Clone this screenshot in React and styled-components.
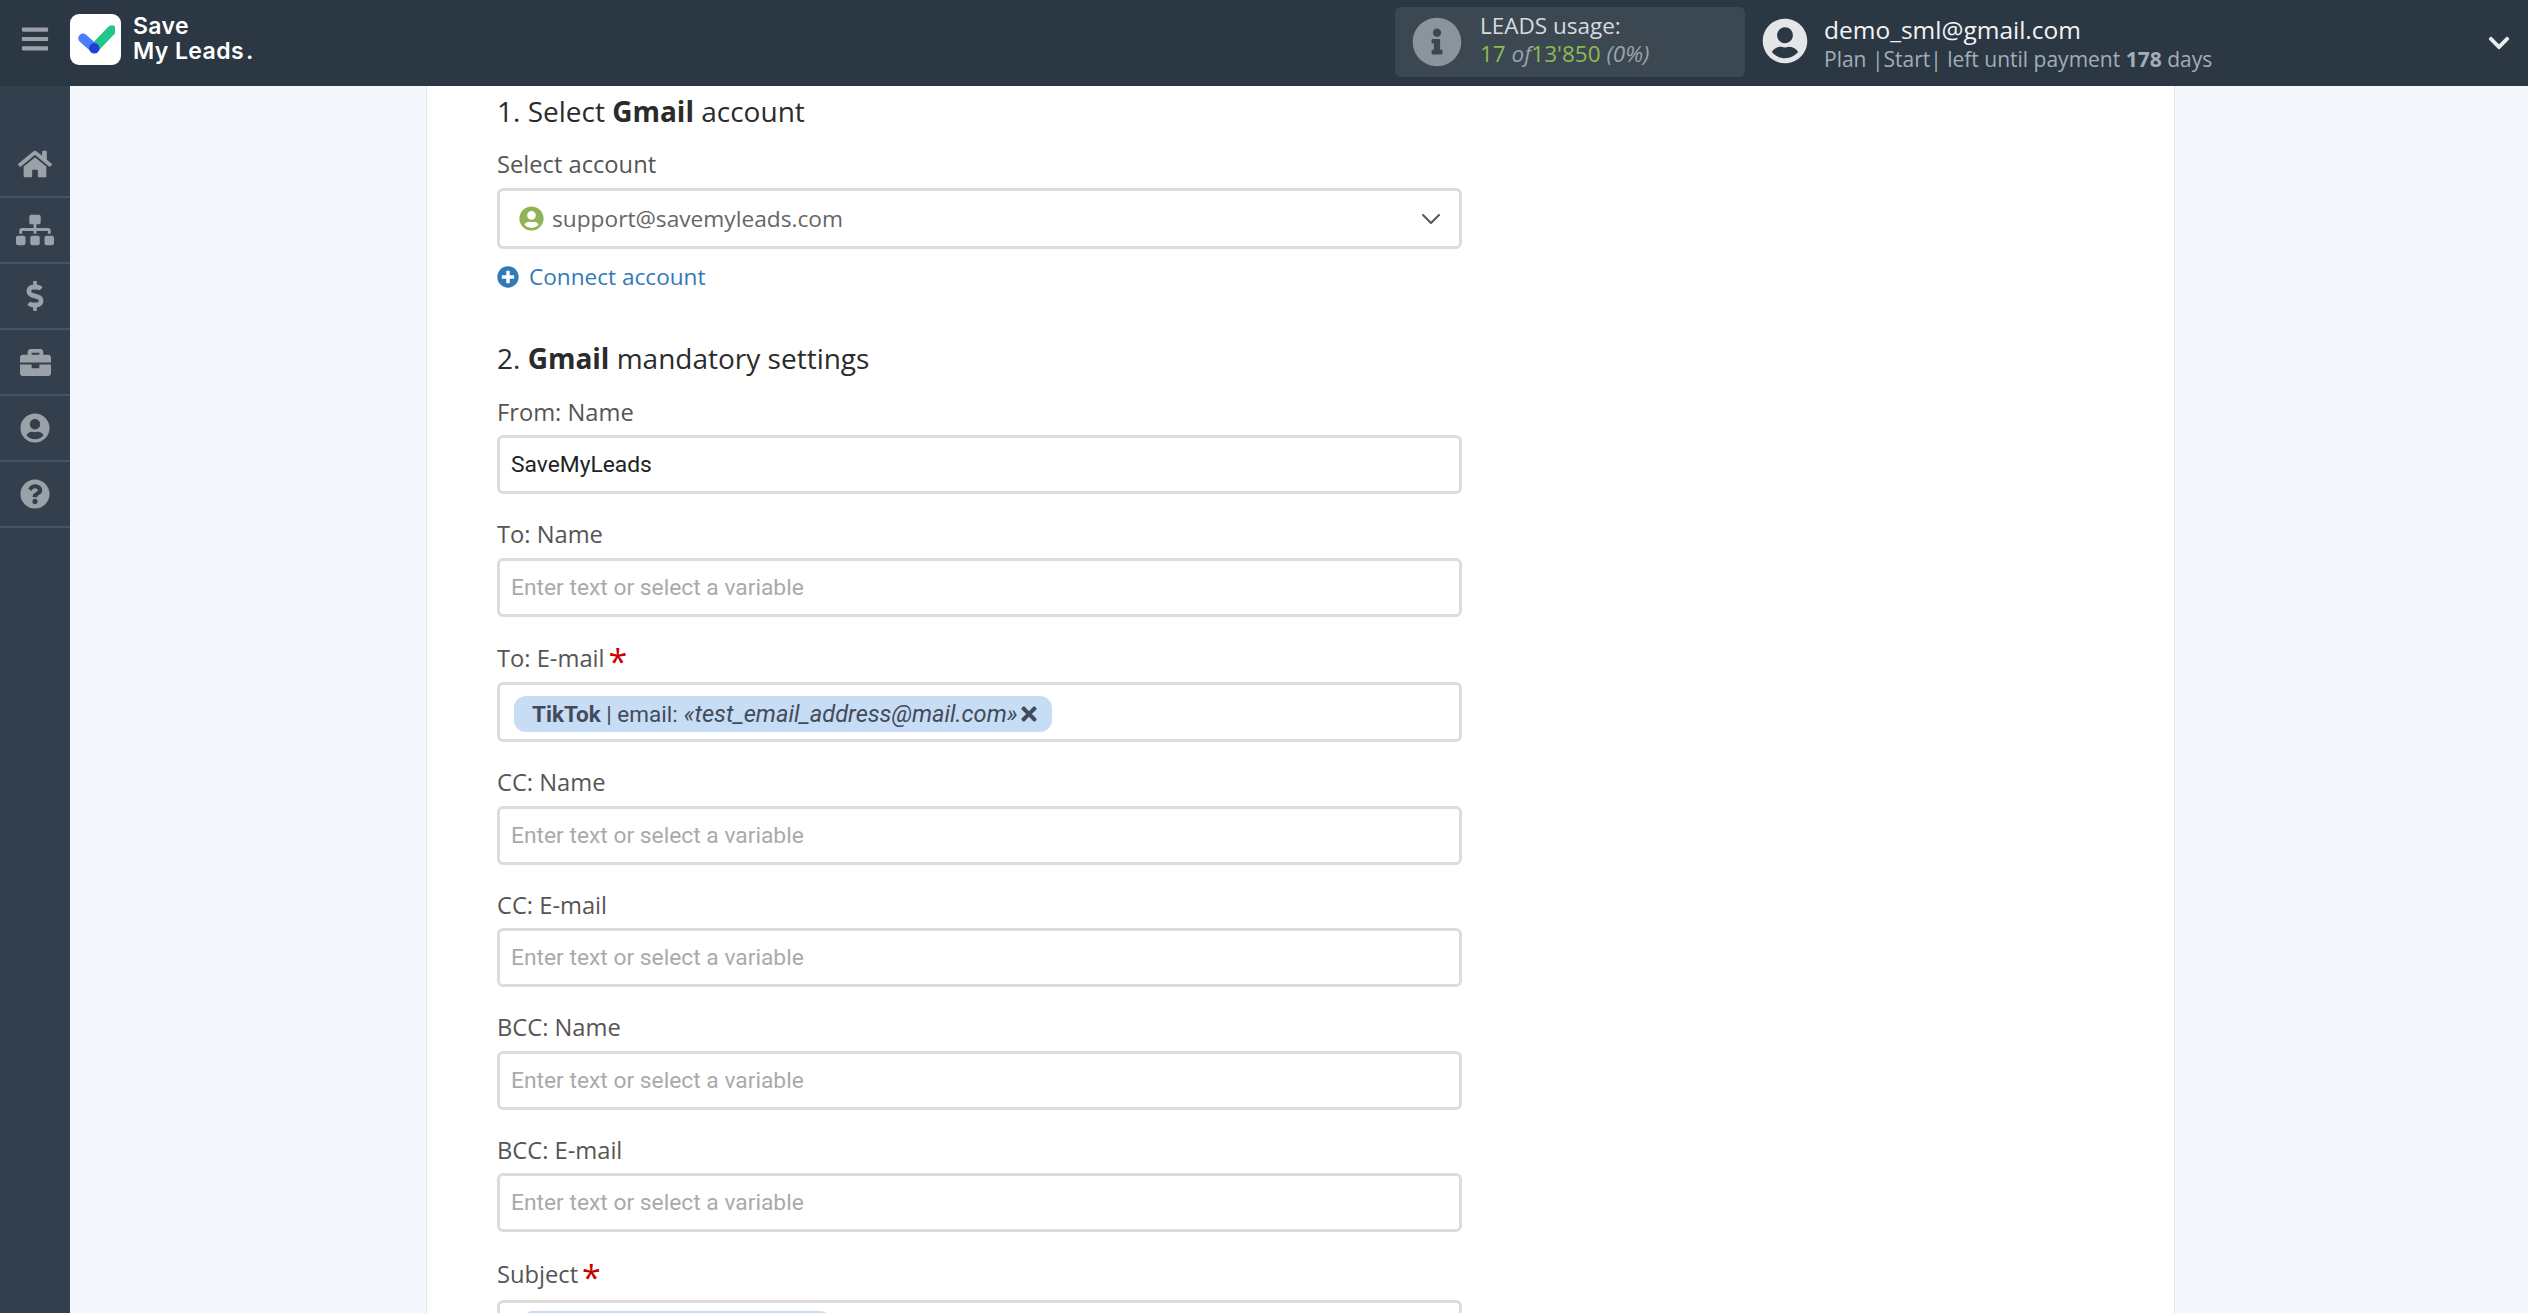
import React from "react";
import styled, { createGlobalStyle } from "styled-components";
import {
  FaHome,
  FaSitemap,
  FaDollarSign,
  FaBriefcase,
  FaUserCircle,
  FaQuestionCircle,
  FaInfoCircle,
  FaChevronDown,
  FaPlusCircle,
  FaTimes,
  FaBars,
} from "react-icons/fa";
import { LuChevronDown } from "react-icons/lu";

const GlobalStyle = createGlobalStyle`
  html, body {
    margin: 0;
    height: 100%;
    overflow: hidden;
    background: #f4f7fc;
    font-family: "Open Sans", "Liberation Sans", sans-serif;
  }
  * { box-sizing: border-box; }
`;

const Page = styled.div`
  height: 100vh;
  display: flex;
  flex-direction: column;
  overflow: hidden;
`;

// header
const Header = styled.header`
  flex: 0 0 86px;
  display: flex;
  align-items: center;
  background: #2c3744;
  color: #fff;
`;

const Brand = styled.div`
  display: flex;
  align-items: center;
  margin-bottom: 8px;
`;

const MenuButton = styled.div`
  width: 70px;
  display: flex;
  justify-content: center;
  color: #9ba1a8;
  font-size: 30px;
`;

const LogoBox = styled.div`
  width: 51px;
  height: 51px;
  border-radius: 9px;
  background: #fff;
  display: flex;
  align-items: center;
  justify-content: center;
`;

const LogoText = styled.div`
  margin-left: 12px;
  font-family: "Inter", sans-serif;
  font-size: 23px;
  font-weight: 600;
  line-height: 25px;
  letter-spacing: 0.4px;

  span {
    margin-left: 2px;
  }
`;

const HeaderRight = styled.div`
  margin-left: auto;
  display: flex;
  align-items: center;
`;

const UsageBox = styled.div`
  width: 350px;
  height: 70px;
  margin-bottom: 3px;
  padding-left: 17px;
  border-radius: 6px;
  background: #3b4852;
  display: flex;
  align-items: center;
  gap: 18px;
  color: #8b949b;
  font-size: 50px;
`;

const UsageText = styled.div`
  font-size: 22.5px;
  line-height: 28px;
  margin-top: -4px;
  color: #d6dade;
`;

const UsageNumbers = styled.div`
  color: #8dba52;
  font-size: 22.5px;
`;

const Muted = styled.i`
  color: #9aa3ab;
`;

const Avatar = styled.div`
  margin: 0 0 4px 17px;
  display: flex;
  color: #e4e5e7;
  font-size: 46px;
`;

const UserInfo = styled.div`
  margin-left: 16px;
  width: 663px;
`;

const UserMail = styled.div`
  font-size: 24.5px;
  line-height: 32px;
  color: #f2f3f4;
`;

const UserPlan = styled.div`
  font-size: 21px;
  line-height: 26px;
  color: #a3adb8;

  b {
    font-weight: 700;
  }
`;

const HeaderChevron = styled.div`
  display: flex;
  margin-right: 17px;
  color: #e9ebed;
  font-size: 24px;
`;

// sidebar
const Body = styled.div`
  flex: 1;
  display: flex;
  min-height: 0;
`;

const Sidebar = styled.nav`
  flex: 0 0 70px;
  padding-top: 46px;
  background: #343f4e;
`;

const SideItem = styled.div`
  height: 66px;
  display: flex;
  align-items: center;
  justify-content: center;
  border-bottom: 2px solid #485361;
  color: #9ba1a8;
  font-size: ${(p) => p.$size || 30}px;
`;

// content
const Main = styled.main`
  flex: 1;
  padding-left: 356px;
  overflow: hidden;
`;

const Card = styled.div`
  width: 1749px;
  min-height: 100%;
  padding: 5px 0 0 70px;
  background: #fff;
  border-left: 1px solid #e3e7ec;
  border-right: 1px solid #e3e7ec;
`;

const Section = styled.div`
  width: 965px;
`;

const Heading = styled.h2`
  margin: 0;
  font-size: 28px;
  line-height: 40px;
  font-weight: 400;
  color: #2b2b2b;

  b {
    font-weight: 700;
  }
`;

const SecondHeading = styled(Heading)`
  margin: 52px 0 1.5px;
  line-height: 24px;
`;

const Label = styled.label`
  display: block;
  height: ${(p) => 63.5 + (p.$extra || 0)}px;
  padding-top: ${(p) => 23 + (p.$extra || 0) / 2}px;
  font-size: 23.7px;
  line-height: 34px;
  font-weight: 500;
  color: #555;
`;

const SelectLabel = styled(Label)`
  height: 57px;
  padding-top: 16px;
`;

const Star = styled.span`
  margin-left: 4px;
  font-family: "Open Sans", sans-serif;
  font-size: 34px;
  line-height: 20px;
  vertical-align: -7px;
  color: #c90000;
`;

const InputBox = styled.div`
  height: 59px;
  padding: 0 12px 0 11px;
  border: 3px solid #dcdcdc;
  border-radius: 6px;
  background: #fff;
  display: flex;
  align-items: center;
  font-family: "Roboto", sans-serif;
  font-size: 22.8px;
  color: ${(p) => (p.$filled ? "#222" : "#aaa")};
`;

const SelectBox = styled(InputBox)`
  height: 61px;
  padding: 0 0 0 19px;
  font-family: "Open Sans", sans-serif;
  font-size: 22.7px;
  color: #666;
`;

const AccountIcon = styled.span`
  display: flex;
  margin-right: 8px;
  color: #8fb356;
  font-size: 25px;
`;

const SelectArrow = styled.span`
  display: flex;
  margin-left: auto;
  margin-right: 12px;
  color: #555;
  font-size: 32px;

  svg {
    stroke-width: 1.5;
  }
`;

const ConnectLink = styled.a`
  margin-top: 11px;
  display: flex;
  align-items: center;
  gap: 10px;
  font-size: 22.6px;
  line-height: 34px;
  color: #3279b7;

  svg {
    font-size: 22px;
  }
`;

const ChipBox = styled(InputBox)`
  height: 60px;
  padding-top: 4px;
`;

const Chip = styled.span`
  height: 36px;
  padding: 0 12px 0 18px;
  margin-left: 3px;
  width: ${(p) => (p.$width ? `${p.$width}px` : "auto")};
  border-radius: 12px;
  background: #c7dcf5;
  display: inline-flex;
  align-items: center;
  font-size: 22.5px;
  color: #434b5a;
  white-space: nowrap;

  b {
    font-weight: 700;
  }

  i {
    margin-left: 6px;
    font-size: 23.6px;
  }

  svg {
    font-size: 22px;
  }
`;

const ClippedBox = styled(InputBox)`
  padding-top: 8px;
  align-items: flex-start;
`;

const ClippedChip = styled(Chip)`
  margin-left: 10px;
`;

const emptyFields = ["To: Name"];
const ccFields = ["CC: Name", "CC: E-mail", "BCC: Name", "BCC: E-mail"];
const placeholder = "Enter text or select a variable";

const LogoMark = () => (
  <svg width="38" height="32" viewBox="0 0 38 32" fill="none">
    <path d="M17.3 25.3L34.7 7" stroke="#22c68b" strokeWidth="9.5" strokeLinecap="round" />
    <path d="M6 15.3L17.3 25.3" stroke="#4a7ffb" strokeWidth="9.5" strokeLinecap="round" />
    <circle cx="17.3" cy="25.3" r="5.2" fill="#1f3fd6" />
  </svg>
);

const EmptyField = ({ label }) => (
  <div>
    <Label>{label}</Label>
    <InputBox>{placeholder}</InputBox>
  </div>
);

const App = () => (
  <Page>
    <GlobalStyle />
    <Header>
      <Brand>
        <MenuButton>
          <FaBars />
        </MenuButton>
        <LogoBox>
          <LogoMark />
        </LogoBox>
        <LogoText>
          Save
          <br />
          My Leads<span>.</span>
        </LogoText>
      </Brand>
      <HeaderRight>
        <UsageBox>
          <FaInfoCircle />
          <UsageText>
            LEADS usage:
            <UsageNumbers>
              17 <Muted>of</Muted>13'850 <Muted>(0%)</Muted>
            </UsageNumbers>
          </UsageText>
        </UsageBox>
        <Avatar>
          <FaUserCircle />
        </Avatar>
        <UserInfo>
          <UserMail>demo_sml@gmail.com</UserMail>
          <UserPlan>
            Plan |Start| left until payment <b>178</b> days
          </UserPlan>
        </UserInfo>
        <HeaderChevron>
          <FaChevronDown />
        </HeaderChevron>
      </HeaderRight>
    </Header>
    <Body>
      <Sidebar>
        <SideItem $size={34}>
          <FaHome />
        </SideItem>
        <SideItem $size={38}>
          <FaSitemap />
        </SideItem>
        <SideItem>
          <FaDollarSign />
        </SideItem>
        <SideItem $size={31}>
          <FaBriefcase />
        </SideItem>
        <SideItem>
          <FaUserCircle />
        </SideItem>
        <SideItem>
          <FaQuestionCircle />
        </SideItem>
      </Sidebar>
      <Main>
        <Card>
          <Section>
            <Heading>
              1. Select <b>Gmail</b> account
            </Heading>
            <SelectLabel>Select account</SelectLabel>
            <SelectBox>
              <AccountIcon>
                <FaUserCircle />
              </AccountIcon>
              support@savemyleads.com
              <SelectArrow>
                <LuChevronDown />
              </SelectArrow>
            </SelectBox>
            <ConnectLink>
              <FaPlusCircle />
              Connect account
            </ConnectLink>
            <SecondHeading>
              2. <b>Gmail</b> mandatory settings
            </SecondHeading>
            <div>
              <Label>From: Name</Label>
              <InputBox $filled>SaveMyLeads</InputBox>
            </div>
            {emptyFields.map((f) => (
              <EmptyField key={f} label={f} />
            ))}
            <div>
              <Label $extra={2}>
                To: E-mail<Star>*</Star>
              </Label>
              <ChipBox>
                <Chip>
                  <b>TikTok</b>&nbsp;| email: <i>«test_email_address@mail.com»</i>
                  <FaTimes />
                </Chip>
              </ChipBox>
            </div>
            {ccFields.map((f) => (
              <EmptyField key={f} label={f} />
            ))}
            <div>
              <Label $extra={4.5}>
                Subject<Star>*</Star>
              </Label>
              <ClippedBox>
                <ClippedChip $width={311} />
              </ClippedBox>
            </div>
          </Section>
        </Card>
      </Main>
    </Body>
  </Page>
);

export default App;
